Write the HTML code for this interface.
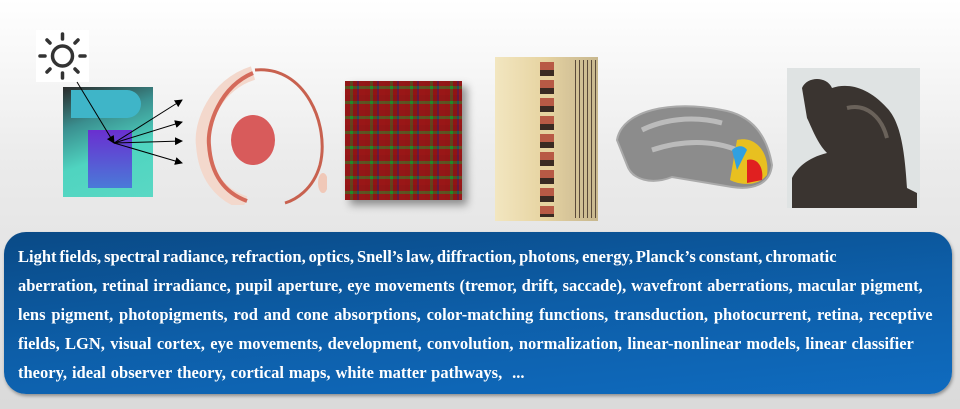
<!DOCTYPE html>
<html><head><meta charset="utf-8"><style>
html,body{margin:0;padding:0}
body{width:960px;height:409px;overflow:hidden;position:relative;background:linear-gradient(#ffffff 0%,#ebebeb 40%,#dadada 100%);font-family:"Liberation Serif",serif}
.a{position:absolute}
.box{left:4px;top:232px;width:948px;height:162px;border-radius:22px;background:linear-gradient(175deg,#0a4a86 0%,#0d5ea8 50%,#0f6bbf 100%);box-shadow:1px 2px 3px rgba(0,0,0,.35)}
.txt{left:18px;top:242px;color:#fff;font-size:16.5px;line-height:29px;white-space:nowrap;font-weight:bold}
</style></head><body>
<div class="a" style="left:36px;top:30px;width:53px;height:52px;background:#fff"></div>
<svg class="a" style="left:36px;top:30px" width="53" height="52" viewBox="0 0 53 52">
<circle cx="26.5" cy="26" r="10" fill="none" stroke="#333" stroke-width="3.5"/>
<g stroke="#333" stroke-width="3.5" stroke-linecap="round">
<line x1="26.5" y1="4" x2="26.5" y2="9"/><line x1="26.5" y1="43" x2="26.5" y2="48"/>
<line x1="4" y1="26" x2="9" y2="26"/><line x1="44" y1="26" x2="49" y2="26"/>
<line x1="11" y1="10" x2="14" y2="13"/><line x1="39" y1="39" x2="42" y2="42"/>
<line x1="42" y1="10" x2="39" y2="13"/><line x1="11" y1="42" x2="14" y2="39"/>
</g></svg>
<div class="a" style="left:63px;top:87px;width:90px;height:110px;background:linear-gradient(160deg,#2a2a2a 0%,#3a8f8f 30%,#4fd4c0 60%,#5ad8c4 100%)"></div>
<div class="a" style="left:71px;top:90px;width:70px;height:28px;border-radius:0 30px 30px 0;background:#3fb5c8"></div>
<div class="a" style="left:88px;top:130px;width:44px;height:58px;background:linear-gradient(#6a2fd0,#4a7ad8)"></div>
<svg class="a" style="left:0;top:0" width="200" height="200">
<defs><marker id="m" markerWidth="8" markerHeight="8" refX="7" refY="4" orient="auto"><path d="M0,0 L8,4 L0,8z" fill="#000"/></marker></defs>
<g stroke="#000" stroke-width="1" fill="none">
<line x1="77" y1="82" x2="114" y2="143" marker-end="url(#m)"/>
<line x1="114" y1="143" x2="182" y2="100" marker-end="url(#m)"/>
<line x1="114" y1="143" x2="182" y2="122" marker-end="url(#m)"/>
<line x1="114" y1="143" x2="182" y2="141" marker-end="url(#m)"/>
<line x1="114" y1="143" x2="182" y2="163" marker-end="url(#m)"/>
</g></svg>
<svg class="a" style="left:195px;top:65px" width="132" height="140" viewBox="0 0 132 140">
<path d="M60,5 C110,0 135,60 125,100 C118,125 100,135 90,138" fill="none" stroke="#c8614f" stroke-width="3"/>
<path d="M58,8 C20,20 5,60 8,80 C10,110 25,130 50,138" fill="none" stroke="#f3d8cc" stroke-width="14"/>
<path d="M58,8 C25,22 12,60 14,80 C16,110 30,128 52,136" fill="none" stroke="#d46a5a" stroke-width="4"/>
<ellipse cx="58" cy="75" rx="22" ry="25" fill="#d85b5b"/>
<ellipse cx="128" cy="118" rx="5" ry="10" fill="#f0c8b8"/>
</svg>
<div class="a" style="left:345px;top:81px;width:117px;height:119px;background:repeating-linear-gradient(90deg,#9b1a1a 0 5px,#1e8a2a 5px 8px,#8a1515 8px 12px,#20208a 12px 14px,#a01c1c 14px 20px),#900;box-shadow:5px 5px 8px rgba(0,0,0,.4)"></div>
<div class="a" style="left:345px;top:81px;width:117px;height:119px;background:repeating-linear-gradient(0deg,rgba(150,20,20,.6) 0 6px,rgba(30,140,40,.5) 6px 9px,rgba(140,20,20,.6) 9px 15px)"></div>
<div class="a" style="left:495px;top:57px;width:103px;height:164px;background:linear-gradient(90deg,#f2e6c0,#e6d3a0 50%,#d8c69a 70%,#c8b88e)"></div>
<div class="a" style="left:540px;top:62px;width:14px;height:155px;background:repeating-linear-gradient(#b85a45 0 8px,#3a2a22 8px 14px,#e6d3a0 14px 18px)"></div>
<div class="a" style="left:575px;top:60px;width:22px;height:158px;background:repeating-linear-gradient(90deg,#5a4a3a 0 1px,transparent 1px 4px)"></div>
<svg class="a" style="left:612px;top:95px" width="165" height="100" viewBox="0 0 165 100">
<path d="M5,45 C10,15 60,5 110,15 C140,20 155,40 160,70 C158,90 140,95 120,92 L60,82 C40,90 20,85 15,70 Z" fill="#8c8c8c" stroke="#aaa" stroke-width="2"/>
<path d="M30,35 C50,25 80,20 110,28 M40,55 C70,45 100,45 125,55" stroke="#bbb" stroke-width="5" fill="none"/>
<path d="M125,45 C145,40 158,60 155,80 C145,92 128,90 118,85 Z" fill="#e8c020"/>
<path d="M135,65 C145,62 152,72 150,85 L135,88 Z" fill="#e02020"/>
<path d="M120,55 C125,50 132,50 135,55 L125,75 Z" fill="#30a0e0"/>
</svg>
<div class="a" style="left:787px;top:68px;width:133px;height:140px;background:#dfe3e3"></div>
<svg class="a" style="left:787px;top:68px" width="133" height="140" viewBox="0 0 133 140">
<path d="M15,20 C20,8 40,8 45,20 C60,15 80,18 100,40 C115,55 118,90 120,120 L130,125 L130,140 L5,140 L5,110 C10,100 20,90 40,85 C30,75 25,60 20,50 Z" fill="#3a3430"/>
<path d="M60,40 C80,35 95,50 100,70" stroke="#6a625a" stroke-width="4" fill="none"/>
</svg>
<div class="a box"></div>
<div class="a txt"><div style="word-spacing:-1.2px">Light fields, spectral radiance, refraction, optics, Snell’s law, diffraction, photons, energy, Planck’s constant, chromatic</div><div style="word-spacing:0.7px">aberration, retinal irradiance, pupil aperture, eye movements (tremor, drift, saccade), wavefront aberrations, macular pigment,</div><div style="word-spacing:1.7px">lens pigment, photopigments, rod and cone absorptions, color-matching functions, transduction, photocurrent, retina, receptive</div><div style="word-spacing:1.2px">fields, LGN, visual cortex, eye movements, development, convolution, normalization, linear-nonlinear models, linear classifier</div><div style="word-spacing:0.8px">theory, ideal observer theory, cortical maps, white matter pathways, &nbsp;...</div></div>
</body></html>
